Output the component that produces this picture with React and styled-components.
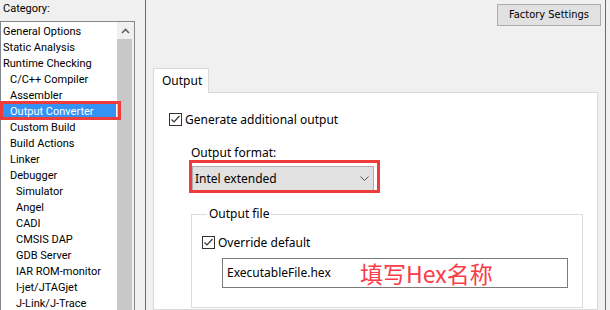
import React from 'react';
import styled, { createGlobalStyle } from 'styled-components';

const GlobalStyle = createGlobalStyle`
  body {
    margin: 0;
    background: #f0f0f0;
    font-family: "Noto Sans", "Liberation Sans", sans-serif;
    font-size: 12px;
    color: #000000;
  }
`;

const Frame = styled.div`
  display: flex;
  width: 610px;
  height: 310px;
  overflow: hidden;
  background: #f0f0f0;
`;

const Sidebar = styled.div`
  display: flex;
  flex-direction: column;
  flex: none;
  width: 145px;
  font-family: Roboto, "Noto Sans", sans-serif;
  font-size: 11px;
`;

const CategoryLabel = styled.div`
  height: 23px;
  padding: 1px 0 0 3px;
  box-sizing: border-box;
  line-height: 16px;
`;

const ListBox = styled.div`
  position: relative;
  display: flex;
  flex: 1;
  width: 135px;
  box-sizing: border-box;
  border: 1px solid #828790;
  border-bottom: none;
  background: #ffffff;
`;

const Items = styled.div`
  flex: 1;
`;

const Item = styled.div`
  height: 16px;
  box-sizing: border-box;
  padding-top: 2px;
  line-height: 15px;
  padding-left: ${(p) => [2, 9, 15][p.level]}px;
  white-space: nowrap;
  background: ${(p) => (p.selected ? '#3392f3' : 'transparent')};
  color: ${(p) => (p.selected ? '#ffffff' : '#000000')};
  margin-right: ${(p) => (p.selected ? '1px' : '0')};
`;

const ScrollBar = styled.div`
  display: flex;
  flex-direction: column;
  width: 17px;
  background: #f0f0f0;
`;

const ScrollArrow = styled.div`
  display: flex;
  align-items: center;
  justify-content: center;
  height: 17px;
`;

const ScrollThumb = styled.div`
  flex: 1;
  width: 15px;
  background: #c8c8c8;
`;

const Highlight = styled.div`
  position: absolute;
  left: -1px;
  top: 79px;
  width: 121px;
  height: 19px;
  box-sizing: border-box;
  border: 3px solid #ee3b3b;
  pointer-events: none;
`;

const Divider = styled.div`
  flex: none;
  width: 1px;
  background: #6b6b6b;
`;

const Main = styled.div`
  display: flex;
  flex-direction: column;
  flex: none;
  width: 459px;
  padding-left: 7px;
  box-sizing: border-box;
`;

const TopBar = styled.div`
  display: flex;
  justify-content: flex-end;
  height: 68px;
  padding: 4px 4px 0 0;
  box-sizing: border-box;
`;

const Button = styled.div`
  width: 104px;
  height: 22px;
  box-sizing: border-box;
  border: 1px solid #adadad;
  background: #e1e1e1;
  font-family: "DejaVu Sans Condensed", "Liberation Sans Narrow", sans-serif;
  font-size: 11px;
  line-height: 20px;
  text-align: center;
`;

const TabStrip = styled.div`
  display: flex;
  margin-bottom: -1px;
  position: relative;
`;

const Tab = styled.div`
  width: 56px;
  height: 25px;
  box-sizing: border-box;
  border: 1px solid #d9d9d9;
  border-bottom: none;
  background: #ffffff;
  padding-left: 8px;
  line-height: 23px;
`;

const Panel = styled.div`
  flex: 1;
  width: 445px;
  box-sizing: border-box;
  border: 1px solid #d9d9d9;
  background: #ffffff;
  padding: 20px 0 0 15px;
`;

const CheckRow = styled.label`
  display: flex;
  align-items: center;
  gap: 3px;
  height: 13px;
  line-height: 16px;
  margin-top: ${(p) => p.top || 0}px;
`;

const FieldLabel = styled.div`
  margin: 19px 0 0 22px;
  line-height: 16px;
`;

const ComboWrap = styled.div`
  position: relative;
  margin: 5px 0 0 23px;
  width: 182px;
`;

const Combo = styled.div`
  display: flex;
  align-items: center;
  justify-content: space-between;
  height: 25px;
  box-sizing: border-box;
  border: 1px solid #adadad;
  background: #e1e1e1;
  padding: 0 4px 0 2px;
`;

const Annotation = styled.div`
  position: absolute;
  left: -3px;
  top: -6px;
  width: 191px;
  height: 33px;
  box-sizing: border-box;
  border: 3px solid #ee3b3b;
  pointer-events: none;
`;

const Group = styled.fieldset`
  margin: 15px 0 0 22px;
  padding: 0 0 0 10px;
  width: 392px;
  height: 102px;
  box-sizing: border-box;
  border: 1px solid #dcdcdc;
  min-width: 0;
`;

const Legend = styled.legend`
  margin-left: 5px;
  padding: 0 2px;
  line-height: 16px;
`;

const TextField = styled.div`
  position: relative;
  display: flex;
  align-items: center;
  margin: 9px 0 0 20px;
  width: 346px;
  height: 30px;
  box-sizing: border-box;
  border: 1px solid #7a7a7a;
  background: #ffffff;
  padding: 0 0 2px 4px;
`;

const RedNote = styled.span`
  position: absolute;
  left: 137px;
  top: -1px;
  font-family: "Noto Sans CJK SC", sans-serif;
  font-size: 23px;
  line-height: 30px;
  color: #fb3c48;
`;

const Tail = styled.div`
  flex: 1;
`;

const CheckBox = () => (
  <svg width="13" height="13" viewBox="0 0 13 13">
    <rect x="0.5" y="0.5" width="12" height="12" fill="#fff" stroke="#333" />
    <polyline points="2.5,6.5 5,9 10.5,3" fill="none" stroke="#333" strokeWidth="1.2" />
  </svg>
);

const categories = [
  ['General Options', 0],
  ['Static Analysis', 0],
  ['Runtime Checking', 0],
  ['C/C++ Compiler', 1],
  ['Assembler', 1],
  ['Output Converter', 1],
  ['Custom Build', 1],
  ['Build Actions', 1],
  ['Linker', 1],
  ['Debugger', 1],
  ['Simulator', 2],
  ['Angel', 2],
  ['CADI', 2],
  ['CMSIS DAP', 2],
  ['GDB Server', 2],
  ['IAR ROM-monitor', 2],
  ['I-jet/JTAGjet', 2],
  ['J-Link/J-Trace', 2],
];

const App = () => (
  <Frame>
    <GlobalStyle />
    <Sidebar>
      <CategoryLabel>Category:</CategoryLabel>
      <ListBox>
        <Items>
          {categories.map(([name, level]) => (
            <Item key={name} level={level} selected={name === 'Output Converter'}>
              {name}
            </Item>
          ))}
        </Items>
        <ScrollBar>
          <ScrollArrow>
            <svg width="9" height="6" viewBox="0 0 9 6">
              <polyline points="1,5 4.5,1.5 8,5" fill="none" stroke="#606060" strokeWidth="1.6" />
            </svg>
          </ScrollArrow>
          <ScrollThumb />
        </ScrollBar>
        <Highlight />
      </ListBox>
    </Sidebar>
    <Divider />
    <Main>
      <TopBar>
        <Button>Factory Settings</Button>
      </TopBar>
      <TabStrip>
        <Tab>Output</Tab>
      </TabStrip>
      <Panel>
        <CheckRow>
          <CheckBox />
          Generate additional output
        </CheckRow>
        <FieldLabel>Output format:</FieldLabel>
        <ComboWrap>
          <Combo>
            Intel extended
            <svg width="9" height="5" viewBox="0 0 9 5">
              <polyline points="0.5,0.5 4.5,4.5 8.5,0.5" fill="none" stroke="#555" strokeWidth="1" />
            </svg>
          </Combo>
          <Annotation />
        </ComboWrap>
        <Group>
          <Legend>Output file</Legend>
          <CheckRow top={14}>
            <CheckBox />
            Override default
          </CheckRow>
          <TextField>
            ExecutableFile.hex
            <RedNote>填写Hex名称</RedNote>
          </TextField>
        </Group>
      </Panel>
    </Main>
    <Divider />
    <Tail />
  </Frame>
);

export default App;
